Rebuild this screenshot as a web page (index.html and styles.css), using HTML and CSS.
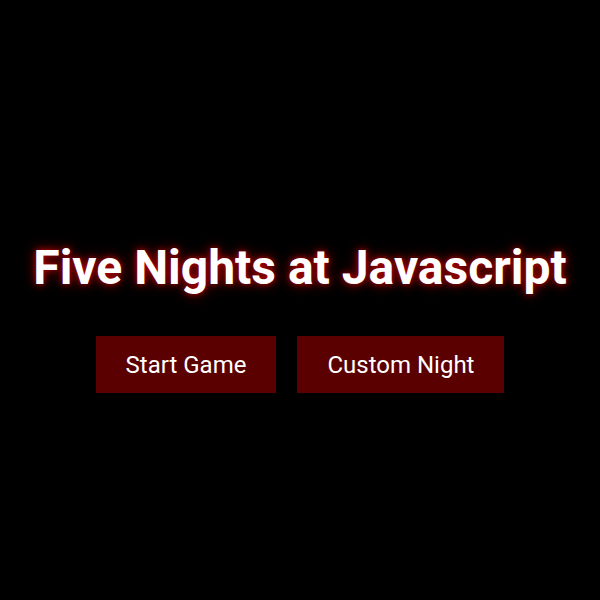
FILE: index.html
```html
<!DOCTYPE html>
<html lang="en">
<head>
    <meta charset="UTF-8">
    <meta name="viewport" content="width=device-width, initial-scale=1.0">
    <title>Five Nights at Javascript</title>
    <link rel="stylesheet" href="styles.css">
</head>
<body>
    <div class="menu">
        <h1 class="title">Five Nights at Javascript</h1>
        <div class="buttons">
            <button class="menu-btn" id="startGame">Start Game</button>
            <button class="menu-btn" id="customNight">Custom Night</button>
        </div>
    </div>
</body>
</html>
```

FILE: styles.css
```css
body {
    font-family: Roboto, "Liberation Sans", sans-serif;
    background: #000;
    color: #fff;
    margin: 0;
    padding: 0;
    display: flex;
    justify-content: center;
    align-items: center;
    height: 100vh;
}

.menu {
    display: flex;
    flex-direction: column;
    align-items: center;
    margin-top: 32px;
}

.title {
    font-size: 48px;
    font-weight: 700;
    margin: 0 0 40px;
    text-shadow: 0 0 6px #c00000, 0 0 14px #800000;
}

.buttons {
    display: flex;
    gap: 21px;
}

.menu-btn {
    font-family: inherit;
    font-size: 24px;
    color: #fff;
    background: #5a0000;
    border: none;
    padding: 14.5px 30px;
    cursor: pointer;
}

.menu-btn:hover {
    background: #7a0000;
}
```
